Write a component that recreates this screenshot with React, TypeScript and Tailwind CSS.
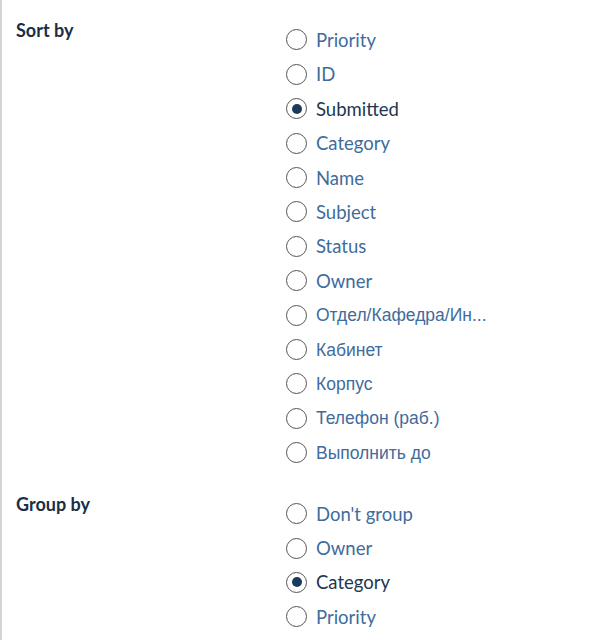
import React from "react";

const sortOptions = [
  "Priority",
  "ID",
  "Submitted",
  "Category",
  "Name",
  "Subject",
  "Status",
  "Owner",
  "Отдел/Кафедра/Ин...",
  "Кабинет",
  "Корпус",
  "Телефон (раб.)",
  "Выполнить до",
];
const groupOptions = ["Don't group", "Owner", "Category", "Priority"];

const isCyr = (s: string) => /[А-Яа-я]/.test(s);

function Radio({ label, checked }: { label: string; checked: boolean }) {
  const cyr = isCyr(label);
  return (
    <div className="h-[34.4px] flex items-center">
      <span className="w-[21px] h-[21px] rounded-full border-[1.5px] border-[#555] bg-white flex items-center justify-center shrink-0">
        {checked && <span className="w-[10px] h-[10px] rounded-full bg-[#1b3a5c]" />}
      </span>
      <span
        className={
          "ml-[9px] leading-[24px] " +
          (cyr ? "text-[17.5px] " : "text-[18.5px] ") +
          (checked ? "text-[#22374f]" : "text-[#3f6c9c]")
        }
        style={cyr ? { fontFamily: "'Liberation Sans', Arial, sans-serif" } : undefined}
      >
        {label}
      </span>
    </div>
  );
}

function Section({
  title,
  options,
  selected,
}: {
  title: string;
  options: string[];
  selected: string;
}) {
  return (
    <div className="flex">
      <div className="w-[286px] pl-[16px]">
        <div className="text-[18px] leading-[24px] font-bold text-[#1a2e45] -mt-[4.8px]">
          {title}
        </div>
      </div>
      <div className="flex flex-col">
        {options.map((o) => (
          <Radio key={o} label={o} checked={o === selected} />
        ))}
      </div>
    </div>
  );
}

export default function App() {
  return (
    <div
      className="w-[609px] h-[640px] bg-white border-l-2 border-[#d4d4d4] overflow-hidden pt-[22.8px]"
      style={{ fontFamily: "Lato, 'Liberation Sans', sans-serif" }}
    >
      <div className="-ml-[2px]">
        <Section title="Sort by" options={sortOptions} selected="Submitted" />
        <div className="h-[26.6px]" />
        <Section title="Group by" options={groupOptions} selected="Category" />
      </div>
    </div>
  );
}
